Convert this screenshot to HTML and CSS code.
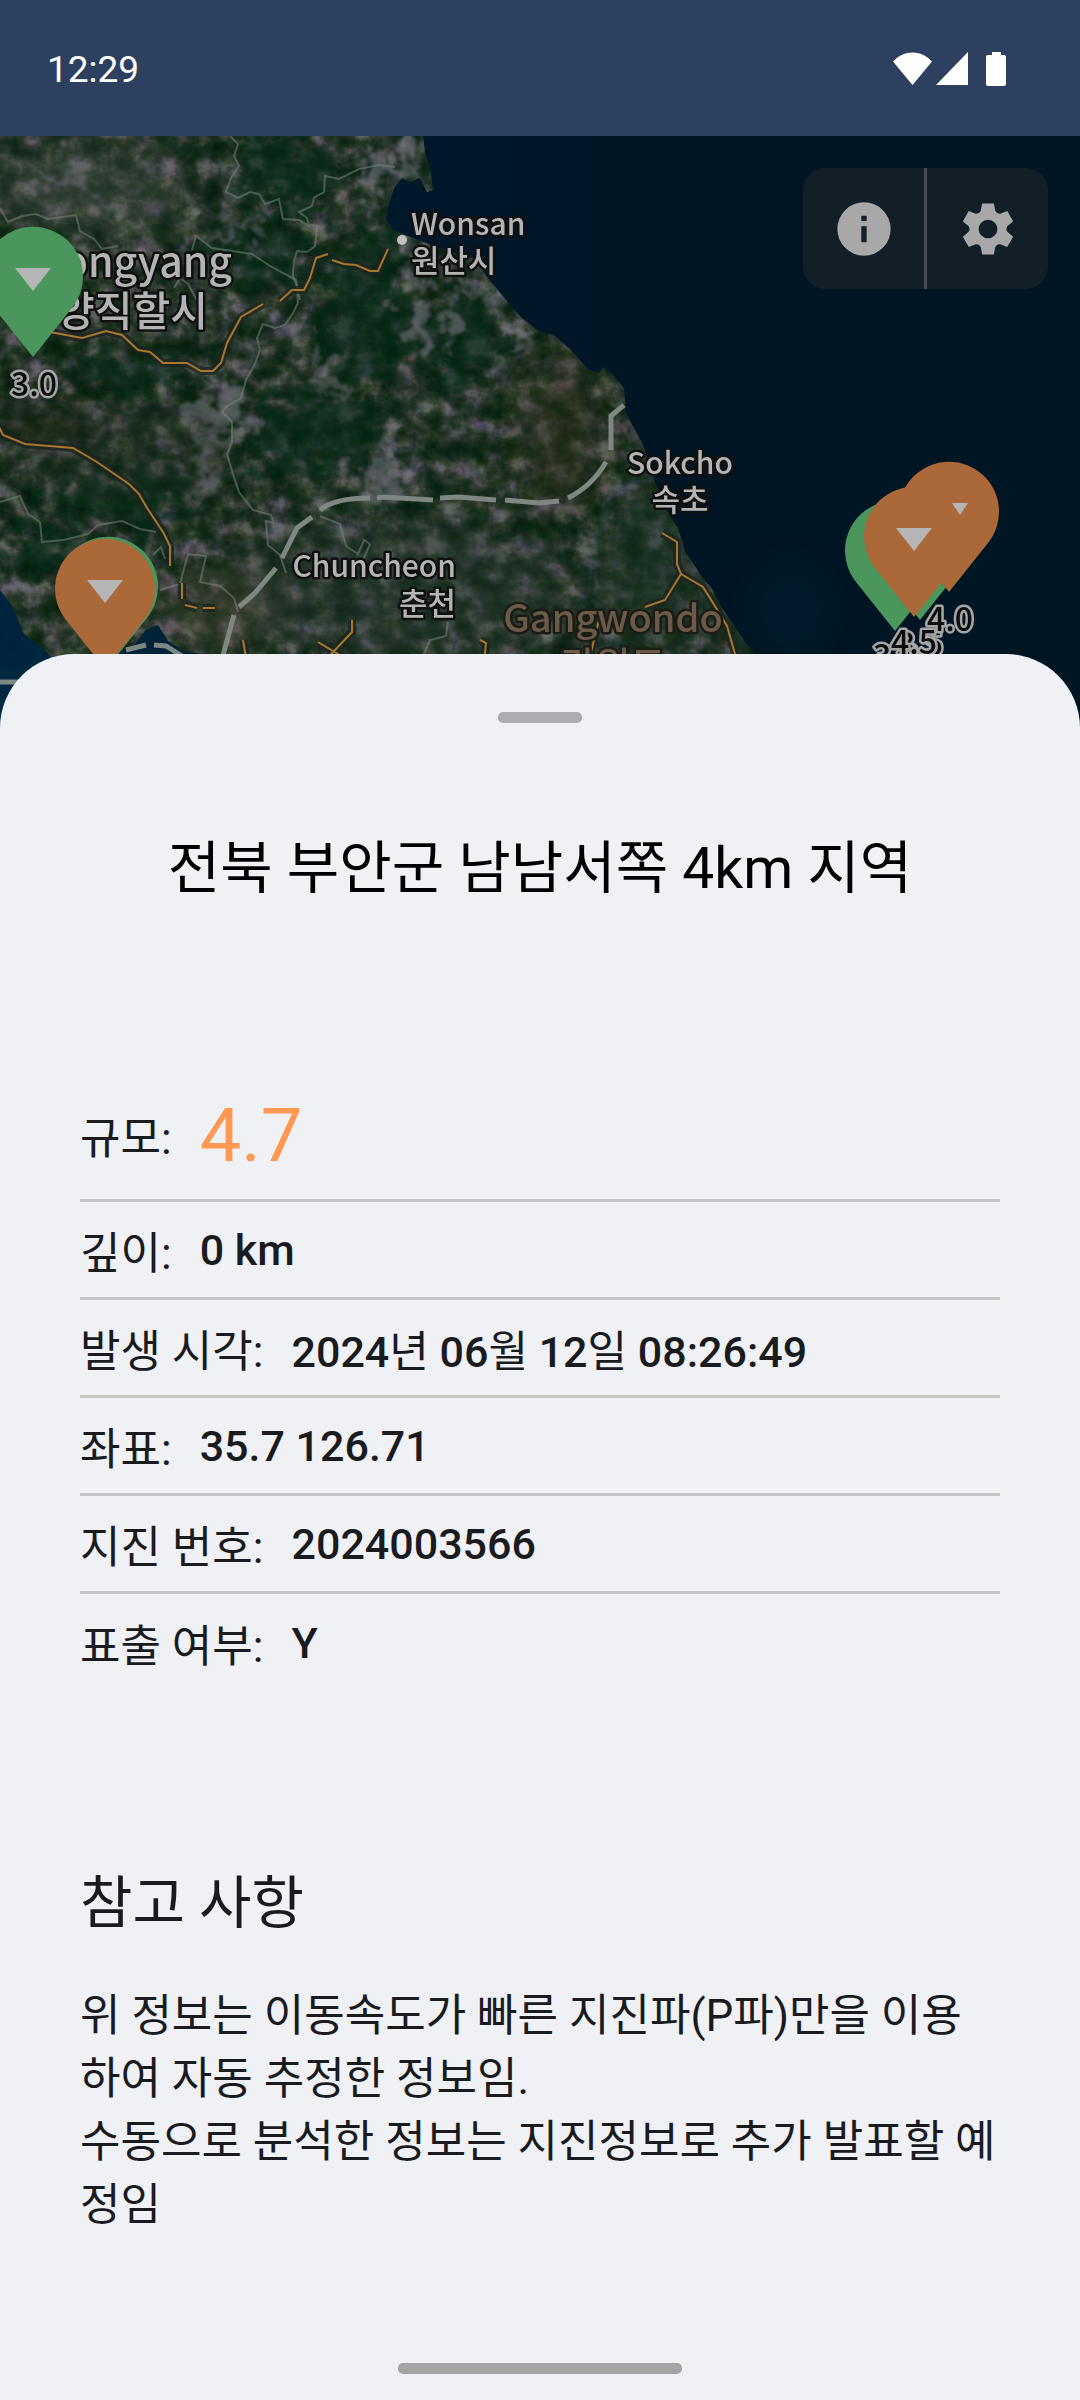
FILE: index.html
```html
<!DOCTYPE html>
<html lang="ko">
<head>
<meta charset="utf-8">
<meta name="viewport" content="width=device-width, initial-scale=1">
<title>지진 정보</title>
<link rel="stylesheet" href="styles.css">
</head>
<body>
<header class="status">
  <time class="status-time">12:29</time>
  <div class="status-icons">
    <svg width="39" height="34" viewBox="0 0 39 34" aria-hidden="true"><path d="M0 9.500C11-2.500 28-2.500 39 9.500L19.500 33Z" fill="#fff"/></svg>
    <svg width="32" height="34" viewBox="0 0 32 34" aria-hidden="true"><path d="M32 0V33H0Z" fill="#fff"/></svg>
    <svg class="battery" width="20" height="34" viewBox="0 0 20 34" aria-hidden="true"><path d="M6 0h9v3h3q2 0 2 2v27q0 2-2 2H2q-2 0-2-2V5q0-2 2-2h4z" fill="#fff"/></svg>
  </div>
</header>

<section class="map" aria-label="지도">
  <svg class="map-canvas" viewBox="0 136 1080 592" preserveAspectRatio="xMidYMin slice">
    <defs>
      <filter id="terrain" x="0" y="0" width="100%" height="100%" color-interpolation-filters="sRGB">
        <feTurbulence type="fractalNoise" baseFrequency="0.045 0.05" numOctaves="4" seed="23"/>
        <feColorMatrix values=".85 .15 0 0 0  .75 .25 0 0 0  .8 .1 .1 0 0  0 0 0 0 1"/>
        <feComponentTransfer>
          <feFuncR type="table" tableValues=".01 .02 .03 .05 .09 .15 .24 .35 .42 .44 .44"/>
          <feFuncG type="table" tableValues=".07 .08 .11 .14 .17 .21 .28 .37 .43 .45 .45"/>
          <feFuncB type="table" tableValues=".03 .04 .05 .08 .11 .16 .25 .37 .44 .46 .46"/>
        </feComponentTransfer>
      </filter>
      <filter id="soft" x="-50%" y="-50%" width="200%" height="200%"><feGaussianBlur stdDeviation="16"/></filter>
      <filter id="ragged" x="-10%" y="-10%" width="120%" height="120%">
        <feTurbulence type="fractalNoise" baseFrequency="0.045" numOctaves="4" seed="4" result="n"/>
        <feGaussianBlur in="SourceGraphic" stdDeviation="4" result="b"/>
        <feDisplacementMap in="b" in2="n" scale="90" xChannelSelector="R" yChannelSelector="G"/>
        <feGaussianBlur stdDeviation="1"/>
      </filter>
      <linearGradient id="sea" x1="0" y1="0" x2="1" y2="0">
        <stop offset="0" stop-color="#002a40"/><stop offset=".35" stop-color="#00182b"/><stop offset=".6" stop-color="#001524"/><stop offset="1" stop-color="#001623"/>
      </linearGradient>
      <clipPath id="land">
        <path d="M0 136H423L425 152 431 172 433 190 427 192 420 178 410 182 402 178 394 188 389 204 386 219 393 230 410 237 440 248 475 259 488 278 506 300 522 318 540 332 554 335 571 350 588 369 598 373 604 367 612 374 624 388 626 413 634 428 643 444 655 482 664 506 678 528 685 551 700 574 712 589 722 608 733 624 745 642 757 654 800 728H240L205 654 185 652 168 641 158 625 146 630 130 650 60 665 44 650 24 634 12 606 0 590Z"/>
      </clipPath>
      <path id="pin" d="M0 0L-39-49A50 50 0 1 1 39-49Z"/>
      <path id="pin-mark" d="M-18-89H18L0-66Z" fill="#b5b5b5"/>
      <g id="roads">
        <path d="M50 332l32 6 24-7 16 4 16 15 12 2 13 11h24l14 8h12l8-8 6-20 14-26 22-13M280 301l12-11h12l6-12 6-20 12-4M332 260l12 4 12 1 14 6h8l10-22"/>
        <path d="M-2 425l5 10 22 9 48 4 24 14 32 22 10 10 8 14 16 24 7 14v20M182 583v16M185 605l12 3M203 608h12M352 620v12l-32 34M318 642l30 18M243 640l4 24M480 640l6 3-2 20"/>
        <path d="M662 533l15 9v22l4 10-16 26-20 7M681 574l22 13 10 16 14 23 8 28M600 616l-10 40"/>
      </g>
    </defs>

    <rect y="136" width="1080" height="592" fill="url(#sea)"/>
    <ellipse cx="790" cy="610" rx="36" ry="46" fill="#002d3c" opacity=".3" filter="url(#soft)"/>
    <ellipse cx="10" cy="620" rx="25" ry="50" fill="#001a3c" opacity=".6" filter="url(#soft)"/>

    <g clip-path="url(#land)">
      <rect y="136" width="1080" height="592" filter="url(#terrain)"/>
      <g filter="url(#ragged)">
        <g fill="#03260c" opacity=".6">
          <ellipse cx="365" cy="310" rx="45" ry="85"/>
          <ellipse cx="262" cy="250" rx="60" ry="34"/>
          <ellipse cx="285" cy="170" rx="56" ry="34"/>
          <ellipse cx="310" cy="435" rx="75" ry="42"/>
          <ellipse cx="130" cy="370" rx="60" ry="20"/>
          <ellipse cx="120" cy="500" rx="80" ry="26"/>
          <ellipse cx="450" cy="340" rx="50" ry="44"/>
          <ellipse cx="50" cy="550" rx="50" ry="20"/>
        </g>
        <g fill="#777683" opacity=".6">
          <ellipse cx="425" cy="320" rx="15" ry="36"/>
          <ellipse cx="225" cy="410" rx="24" ry="26"/>
          <ellipse cx="206" cy="460" rx="10" ry="30"/>
          <ellipse cx="382" cy="478" rx="26" ry="16"/>
          <ellipse cx="388" cy="168" rx="28" ry="14"/>
          <ellipse cx="414" cy="238" rx="12" ry="24"/>
          <ellipse cx="488" cy="294" rx="22" ry="6"/>
          <ellipse cx="60" cy="174" rx="24" ry="10"/>
          <ellipse cx="525" cy="332" rx="14" ry="8"/>
          <ellipse cx="235" cy="230" rx="26" ry="5"/>
          <ellipse cx="325" cy="370" rx="5" ry="28"/>
          <ellipse cx="615" cy="395" rx="6" ry="14"/>
        </g>
      </g>
      <g filter="url(#soft)">
        <ellipse cx="30" cy="420" rx="60" ry="25" fill="#1a230f" opacity=".5"/>
        <ellipse cx="90" cy="190" rx="100" ry="45" fill="#4f5650" opacity=".35"/>
        <ellipse cx="560" cy="430" rx="45" ry="80" fill="#2e2c1a" opacity=".45"/>
        <ellipse cx="650" cy="570" rx="50" ry="90" fill="#123020" opacity=".5"/>
        <ellipse cx="400" cy="590" rx="170" ry="70" fill="#213a31" opacity=".4"/>
        <ellipse cx="220" cy="610" rx="60" ry="40" fill="#4f4a38" opacity=".4"/>
        <ellipse cx="120" cy="450" rx="120" ry="50" fill="#1c2a20" opacity=".3"/>
      </g>
    </g>

    <g class="province">
      <path d="M230 136l8 8-4 12 5 10-8 12-5 14 12 6 12-6 9 2 6 10 14-5 4 20 16 1 10 6-2-8-8-6 13-6 2-8 10-6 1-16 14 3 8-4 12-6 20-4 16 2M308 224l9 2-2 20-8 6-10-1-3 10-1 14 4 12 1 16-5 10-8 12-10 3-12-4-6 14 3 12-5 14-9 16-5 18-14 8-5 6 10 10v20l-5 12 6 20 6 18 14 18 18 5 3 8-8-2 2 24 12 10 6 18"/>
      <path d="M0 208l8 14 14-6 14-2 12 5 28-4 4 16 14 8 8 10 16-3M192 250l4-14 16 12 40 6 18 12 26 14 4 20M174 288l6-10 8 6 10 18M0 502l20-6 8 18 12 8 2 20 22-2 24-6 10-9 24-4 18 8 16 3M153 555l8-8 4 12M160 590l20-6 8-30 18 2-6 26 20 4 14 12 4 14M320 516l20 8 6 22 12 8 6-14 6 4-6 14M448 622l-2 14-16 4-6 14"/>
    </g>
    <use href="#roads" class="road-case"/>
    <use href="#roads" class="road"/>
    <g class="frontier">
      <path d="M624 405l-13 11v34M606 462q-14 24-38 36M559 501l-20 2-34-3M496 500l-38-3-18 1M433 500l-50-3-6 1M370 498q-36 0-50 12M312 517l-15 11-15 30M276 568l-22 26-15 13M234 615l-12 44M0 682h20M126 650l20-5M154 645l12 1 16 10"/>
    </g>
    <circle cx="402" cy="240" r="5" fill="#c1c1c1"/>

    <g class="place">
      <text x="411" y="235" class="town">Wonsan</text>
      <text x="411" y="272" class="town-ko">원산시</text>
      <text x="232" y="277" class="city end">Pyongyang</text>
      <text x="208" y="326" class="city end">평양직할시</text>
      <text x="680" y="474" class="town mid">Sokcho</text>
      <text x="680" y="511" class="town-ko mid">속초</text>
      <text x="456" y="577" class="town end">Chuncheon</text>
      <text x="456" y="615" class="town-ko end">춘천</text>
      <g class="region">
        <text x="613" y="632" class="mid">Gangwondo</text>
        <text x="613" y="679" class="mid">강원도</text>
      </g>
    </g>

    <g class="pins">
      <g transform="translate(33 357)"><use href="#pin" fill="#4a965d"/><use href="#pin-mark"/></g>
      <use href="#pin" x="108" y="667" fill="#4a965d"/>
      <g transform="translate(105 669)"><use href="#pin" fill="#ab6838"/><use href="#pin-mark"/></g>
      <use href="#pin" x="920" y="620" fill="#4a965d"/>
      <use href="#pin" x="895" y="631" fill="#4a965d"/>
      <use href="#pin" x="949" y="592" fill="#ab6838"/>
      <path d="M952 503h16l-8 12z" fill="#b5b5b5"/>
      <g transform="translate(914 617)"><use href="#pin" fill="#ab6838"/><use href="#pin-mark"/></g>
    </g>
    <g class="magnitude">
      <text x="34" y="396">3.0</text>
      <text x="896" y="668">3.3</text>
      <text x="920" y="656">3.5</text>
      <text x="950" y="631">4.0</text>
      <text x="914" y="654">4.5</text>
    </g>
  </svg>

  <div class="map-tools">
    <button type="button" class="tool" aria-label="정보">
      <svg width="64" height="64" viewBox="0 0 24 24" aria-hidden="true"><path fill="currentColor" d="M12 2a10 10 0 1 0 0 20 10 10 0 0 0 0-20zm1 15h-2v-6h2zm0-8h-2V7h2z"/></svg>
    </button>
    <button type="button" class="tool" aria-label="설정">
      <svg width="64" height="64" viewBox="-12 -12 24 24" aria-hidden="true">
        <defs><path id="tooth" d="M-2.200-9.600H2.200L2.700-6.800 3.400-5.800 2-4.500H-2L-3.400-5.800-2.700-6.800Z"/></defs>
        <circle r="5.200" fill="none" stroke="currentColor" stroke-width="3.400"/>
        <g fill="currentColor">
          <use href="#tooth"/><use href="#tooth" transform="rotate(60)"/><use href="#tooth" transform="rotate(120)"/>
          <use href="#tooth" transform="rotate(180)"/><use href="#tooth" transform="rotate(240)"/><use href="#tooth" transform="rotate(300)"/>
        </g>
      </svg>
    </button>
  </div>
</section>

<main class="sheet">
  <div class="handle"></div>
  <h1 class="title">전북 부안군 남남서쪽 4km 지역</h1>

  <dl class="facts">
    <div class="fact fact-main"><dt>규모:</dt><dd>4.7</dd></div>
    <div class="fact"><dt>깊이:</dt><dd>0 km</dd></div>
    <div class="fact"><dt>발생 시각:</dt><dd>2024<span class="unit">년</span> 06<span class="unit">월</span> 12<span class="unit">일</span> 08:26:49</dd></div>
    <div class="fact"><dt>좌표:</dt><dd>35.7 126.71</dd></div>
    <div class="fact"><dt>지진 번호:</dt><dd>2024003566</dd></div>
    <div class="fact"><dt>표출 여부:</dt><dd>Y</dd></div>
  </dl>

  <section class="note">
    <h2>참고 사항</h2>
    <p>위 정보는 이동속도가 빠른 지진파(P파)만을 이용하여 자동 추정한 정보임.<br>수동으로 분석한 정보는 지진정보로 추가 발표할 예정임</p>
  </section>
  <div class="home-bar"></div>
</main>
</body>
</html>
```

FILE: styles.css
```css
* {
  box-sizing: border-box;
}

body {
  margin: 0;
  min-height: 100vh;
  display: flex;
  flex-direction: column;
  background: #eff1f5;
  color: #1a1b1f;
  font-family: Roboto, "Noto Sans CJK KR", sans-serif;
  font-size: 44px;
}

.status {
  display: flex;
  align-items: center;
  justify-content: space-between;
  height: 136px;
  padding: 2px 74px 0 47px;
  background: #2d4060;
  color: #fff;
}

.status-time {
  font-size: 37px;
}

.status-icons {
  display: flex;
  gap: 4px;
}

.battery {
  margin-left: 14px;
}

.map {
  position: relative;
  height: 592px;
  background: #001623;
  overflow: hidden;
}

.map-canvas {
  display: block;
  width: 100%;
  height: 100%;
}

.province {
  fill: none;
  stroke: #7c8a80;
  stroke-opacity: .5;
  stroke-width: 2;
}

.road,
.road-case {
  fill: none;
}

.road {
  stroke: #a9772c;
  stroke-width: 2;
}

.road-case {
  stroke: #1c2420;
  stroke-width: 8;
  stroke-opacity: .8;
}

.frontier {
  fill: none;
  stroke: #7e8782;
  stroke-width: 5;
}

.place,
.magnitude {
  font-family: "Noto Sans CJK KR", sans-serif;
  font-weight: 500;
  paint-order: stroke fill;
  stroke-linejoin: round;
}

.place {
  fill: #b4b4b4;
  stroke: #101010;
  stroke-width: 5;
}

.town {
  font-size: 30px;
}

.town-ko {
  font-size: 31px;
}

.city {
  font-size: 41px;
}

.mid {
  text-anchor: middle;
}

.end {
  text-anchor: end;
}

.region {
  font-size: 38px;
  fill: #6c5a48;
  stroke: #1c1c16;
}

.magnitude {
  font-size: 32px;
  text-anchor: middle;
  fill: #0c0c0c;
  stroke: #a5a5a5;
  stroke-width: 5;
}

.map-tools {
  position: absolute;
  top: 32px;
  right: 32px;
  display: flex;
  border-radius: 22px;
  background: #121f26;
  overflow: hidden;
}

.tool {
  display: grid;
  place-items: center;
  width: 121px;
  height: 121px;
  padding: 0;
  border: 0;
  background: none;
  color: #a8a8a8;
}

.tool + .tool {
  width: 124px;
  border-left: 3px solid #444e53;
}

.sheet {
  position: relative;
  flex: 1;
  display: flex;
  flex-direction: column;
  margin-top: -74px;
  padding: 58px 80px 26px;
  border-radius: 74px 74px 0 0;
  background: #eff1f5;
}

.handle {
  align-self: center;
  width: 84px;
  height: 11px;
  border-radius: 5px;
  background: #acadb1;
}

.title {
  margin: 106px 0 0;
  color: #000;
  font-size: 57px;
  font-weight: 400;
  line-height: 80px;
  text-align: center;
}

.facts {
  margin: 162px 0 0;
}

.fact {
  display: flex;
  align-items: center;
  gap: 28px;
  min-height: 98px;
  border-bottom: 3px solid #c4c6c6;
}

.fact:last-child {
  border-bottom: 0;
}

.fact dd {
  margin: 0;
  font-size: 43px;
  font-weight: 500;
}

.fact .unit {
  font-weight: 400;
}

.fact-main {
  min-height: 131px;
}

.fact-main dd {
  color: #ff9952;
  font-size: 74px;
  font-weight: 400;
}

.note {
  margin-top: 172px;
}

.note h2 {
  margin: 0;
  font-size: 57px;
  font-weight: 400;
  line-height: 80px;
}

.note p {
  margin: 41px 0 0;
  line-height: 63px;
}

.home-bar {
  align-self: center;
  width: 284px;
  height: 11px;
  margin-top: auto;
  border-radius: 5px;
  background: #a3a5a5;
}
```
